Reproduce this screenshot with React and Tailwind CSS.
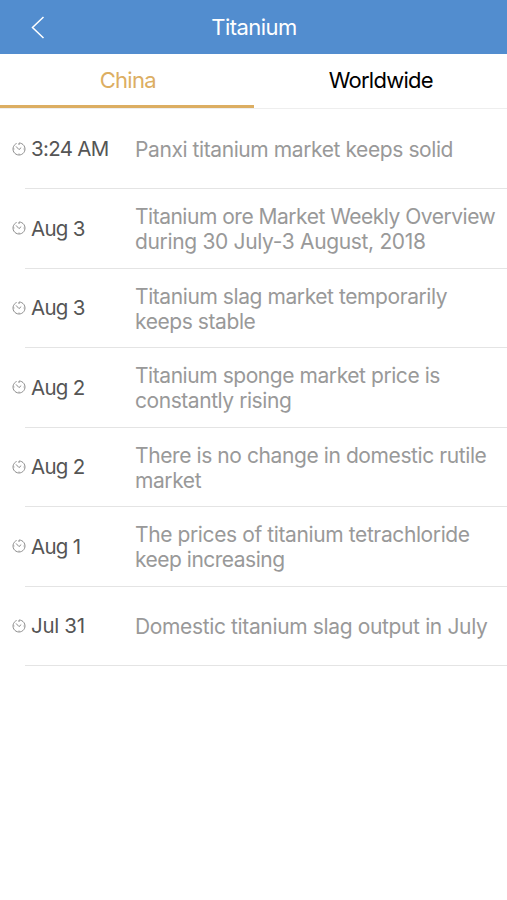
import React from 'react';

const NEWS = [
    { date: '3:24 AM', lines: ['Panxi titanium market keeps solid'], tracking: 'tracking-[-0.41px]' },
    {
        date: 'Aug 3',
        lines: ['Titanium ore Market Weekly Overview', 'during 30 July-3 August, 2018'],
        tracking: 'tracking-[-0.49px]',
        lastTracking: 'tracking-[-0.34px]',
    },
    { date: 'Aug 3', lines: ['Titanium slag market temporarily', 'keeps stable'], tracking: 'tracking-[-0.42px]' },
    { date: 'Aug 2', lines: ['Titanium sponge market price is', 'constantly rising'], tracking: 'tracking-[-0.44px]' },
    { date: 'Aug 2', lines: ['There is no change in domestic rutile', 'market'], tracking: 'tracking-[-0.41px]' },
    {
        date: 'Aug 1',
        lines: ['The prices of titanium tetrachloride', 'keep increasing'],
        tracking: 'tracking-[-0.39px]',
        lastTracking: 'tracking-[-0.5px]',
    },
    {
        date: 'Jul 31',
        dateTracking: 'tracking-[-0.3px]',
        lines: ['Domestic titanium slag output in July'],
        tracking: 'tracking-[-0.36px]',
    },
];

const ClockIcon = () => (
    <svg width="14" height="14" viewBox="0 0 14 14" fill="none" stroke="#8c8c8c" strokeWidth="1">
        {/* ring, open just left of twelve */}
        <path d="M7 3V1A6 6 0 1 1 4.6 1.5" />
        <path d="M4 4.4L7 7.6L9.2 5.6" />
        <path d="M1.2 7H2.6M11.4 7H12.8M7 11.4V12.8" strokeWidth="0.7" />
    </svg>
);

const App = () => (
    <div className="h-[900px] w-[507px] bg-white font-['Inter',sans-serif]">
        <header className="grid h-[54px] grid-cols-3 items-center bg-[#528dcf] text-white">
            <svg className="ml-[30px]" width="16" height="24" viewBox="0 0 16 24" fill="none" stroke="currentColor" strokeWidth="1.5">
                <path d="M13.5 2L2.5 12.5L13.5 23" />
            </svg>
            <h1 className="pl-px text-center text-[22px] tracking-[-0.55px]">Titanium</h1>
        </header>
        <nav className="grid h-[55px] grid-cols-2 border-b border-[#eee] text-center text-[22px] leading-[53px] tracking-[-0.75px]">
            <div className="h-[54px] border-b-3 border-[#dcae62] pl-[2px] text-[#dcae62]">China</div>
            <div className="pl-[1px] text-black">Worldwide</div>
        </nav>
        <ul>
            {NEWS.map((item, i) => (
                <li key={i} className="h-[79.5px]">
                    <div className="flex h-[79px] items-center pl-3">
                        <ClockIcon />
                        <span className={`ml-[5px] w-[104px] pt-[2px] text-[20.5px] text-[#555] ${item.dateTracking || 'tracking-[-0.7px]'}`}>
                            {item.date}
                        </span>
                        <p className="pt-[2px] text-[21px] leading-[25px] whitespace-nowrap text-[#999]">
                            {item.lines.map((line, n) => (
                                <span key={line} className={`block ${n > 0 && item.lastTracking ? item.lastTracking : item.tracking}`}>
                                    {line}
                                </span>
                            ))}
                        </p>
                    </div>
                    <div className="ml-[25px] h-px bg-[#e4e4e4]" />
                </li>
            ))}
        </ul>
    </div>
);

export default App;
